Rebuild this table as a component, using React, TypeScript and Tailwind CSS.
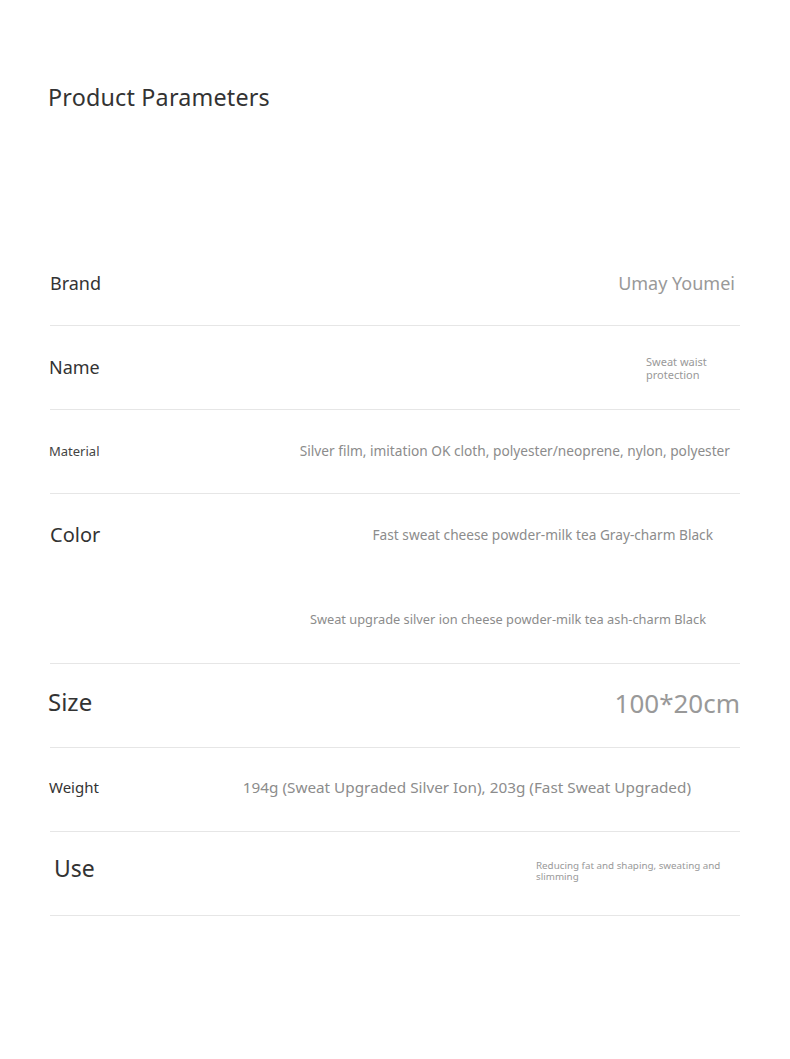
import React from 'react';

const sans = "font-['Noto_Sans','Open_Sans',sans-serif]";

// one row of the parameter table
const Row = ({ children, className = '' }: { children: React.ReactNode; className?: string }) => (
    <div className={`flex items-center justify-between border-b border-[#e6e6e6] h-[84px] ${className}`}>
        {children}
    </div>
);

export default function App() {
    return (
        <div className={`${sans} w-[790px] h-[1059px] bg-white text-[#333]`}>
            <h1 className="pt-[80px] pl-[48px] text-[23.3px] leading-[34px] text-[#333] tracking-[0.2px]">
                Product Parameters
            </h1>

            <div className="ml-[50px] w-[690px] mt-[128px]">
                <Row>
                    <span className="text-[18px] text-[#333]">Brand</span>
                    <span className="text-[18px] text-[#999] pr-[5px]">Umay Youmei</span>
                </Row>

                <Row>
                    <span className="text-[18px] -ml-[1px] text-[#333]">Name</span>
                    <span className="w-[94px] pr-[20px] text-[11px] leading-[13px] text-[#999]">
                        Sweat waist protection
                    </span>
                </Row>

                <Row>
                    <span className="text-[13px] -ml-[1px] text-[#444]">Material</span>
                    <span className="text-[13.7px] text-[#8c8c8c] pr-[10px]">
                        Silver film, imitation OK cloth, polyester/neoprene, nylon, polyester
                    </span>
                </Row>

                <div className="flex flex-col border-b border-[#e6e6e6] h-[170px]">
                    <div className="flex items-center justify-between h-[82px]">
                        <span className="text-[20px] text-[#333]">Color</span>
                        <span className="text-[13.7px] text-[#8c8c8c] pr-[27px]">
                            Fast sweat cheese powder-milk tea Gray-charm Black
                        </span>
                    </div>
                    <div className="flex items-center justify-end h-[87px]">
                        <span className="text-[12.8px] text-[#8c8c8c] pr-[34px]">
                            Sweat upgrade silver ion cheese powder-milk tea ash-charm Black
                        </span>
                    </div>
                </div>

                <Row>
                    <span className="text-[24px] -ml-[2px] -mt-[8px] text-[#333]">Size</span>
                    <span className="text-[26px] text-[#999] -mt-[4px]">100*20cm</span>
                </Row>

                <Row>
                    <span className="text-[15px] -ml-[1px] -mt-[4px] text-[#333]">Weight</span>
                    <span className="text-[15.3px] text-[#8c8c8c] pr-[49px] -mt-[4px]">
                        194g (Sweat Upgraded Silver Ion), 203g (Fast Sweat Upgraded)
                    </span>
                </Row>

                <Row>
                    <span className="text-[23px] ml-[4px] -mt-[10px] text-[#333]">Use</span>
                    <span className="w-[204px] text-[9.8px] leading-[11px] text-[#999] -mt-[6px]">
                        Reducing fat and shaping, sweating and slimming
                    </span>
                </Row>
            </div>
        </div>
    );
}
